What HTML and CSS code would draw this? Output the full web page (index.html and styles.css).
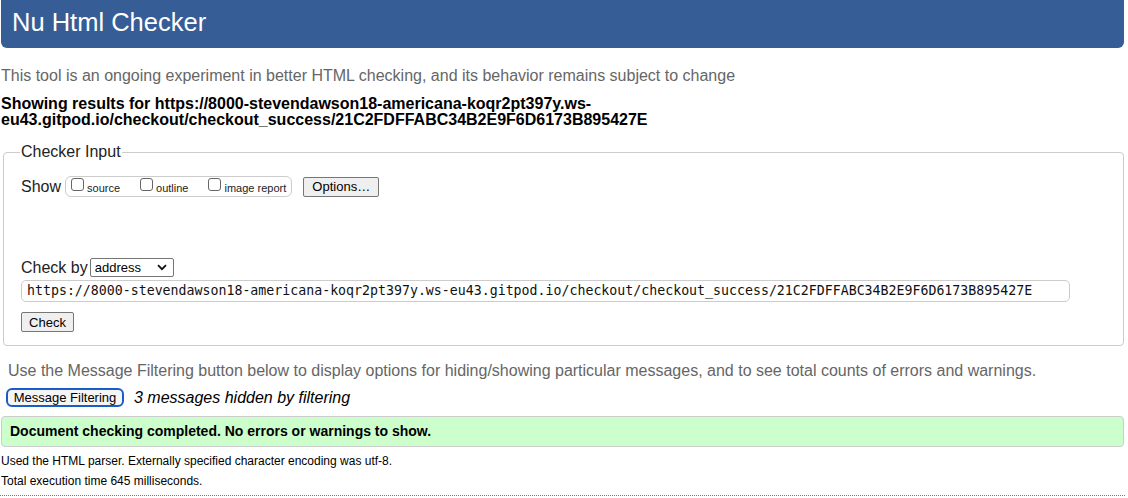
FILE: index.html
```html
<!DOCTYPE html>
<html>
<head>
<meta charset="utf-8">
<title>Nu Html Checker</title>
<link rel="stylesheet" href="styles.css">
</head>
<body>
<h1 class="title">Nu Html Checker</h1>
<p class="intro">This tool is an ongoing experiment in better HTML checking, and its behavior remains subject to change</p>
<p class="results">Showing results for https://8000-stevendawson18-americana-koqr2pt397y.ws-<br>eu43.gitpod.io/checkout/checkout_success/21C2FDFFABC34B2E9F6D6173B895427E</p>
<fieldset class="input-box">
  <legend class="legend">Checker Input</legend>
  <div class="show-row">
    <span class="show-label">Show</span>
    <span class="show-opts">
      <label class="opt"><span class="cb"></span>source</label>
      <label class="opt"><span class="cb"></span>outline</label>
      <label class="opt"><span class="cb"></span>image report</label>
    </span>
    <span class="btn btn-options">Options…</span>
  </div>
  <div class="checkby-row">
    <span class="checkby-label">Check by</span>
    <span class="select">address<svg class="chev" width="10" height="7" viewBox="0 0 10 7"><path d="M1 1.2 L5 5.2 L9 1.2" fill="none" stroke="#111" stroke-width="1.8"/></svg></span>
  </div>
  <div class="url-input">https://8000-stevendawson18-americana-koqr2pt397y.ws-eu43.gitpod.io/checkout/checkout_success/21C2FDFFABC34B2E9F6D6173B895427E</div>
  <span class="btn btn-check">Check</span>
</fieldset>
<p class="filter-note">Use the Message Filtering button below to display options for hiding/showing particular messages, and to see total counts of errors and warnings.</p>
<div class="filter-row">
  <span class="btn btn-filter">Message Filtering</span>
  <span class="hidden-count">3 messages hidden by filtering</span>
</div>
<div class="success">Document checking completed. No errors or warnings to show.</div>
<p class="meta">Used the HTML parser. Externally specified character encoding was utf-8.</p>
<p class="meta">Total execution time 645 milliseconds.</p>
<div class="dotted"></div>
</body>
</html>
```
FILE: styles.css
```css
html, body {
  margin: 0;
  padding: 0;
  background: #fff;
}
body {
  font-family: "Liberation Sans", Arial, Helvetica, sans-serif;
  color: #000;
  width: 1125px;
  font-size: 16px;
}
.title {
  margin: 0 0 0 1px;
  background: #365d95;
  color: #fff;
  font-weight: normal;
  font-size: 25.5px;
  line-height: 44px;
  height: 48px;
  padding: 0 0 0 11px;
  border-radius: 0 0 6px 6px;
  width: 1112px;
}
.intro {
  margin: 18px 0 0 1px;
  color: #666;
  font-size: 16px;
  line-height: 19px;
}
.results {
  margin: 11px 0 0 1px;
  font-weight: bold;
  font-size: 16px;
  line-height: 16px;
}
.input-box {
  margin: 15px 0 0 3px;
  padding: 6px 17px 12px 17px;
  border: 1px solid #ccc;
  border-radius: 4px;
  width: 1085px;
  height: 183px;
  box-sizing: content-box;
}
.legend {
  padding: 0 1px;
  margin-left: -1px;
  font-size: 16px;
  color: #222;
}
.show-row {
  display: flex;
  align-items: center;
  margin-top: 9px;
}
.show-label {
  font-size: 16px;
  color: #222;
  margin-right: 4px;
}
.show-opts {
  display: inline-flex;
  align-items: center;
  border: 1px solid #ccc;
  border-radius: 6px;
  height: 19px;
  padding: 0 5px 0 5px;
  gap: 20px;
}
.opt {
  display: inline-flex;
  align-items: center;
  font-size: 11px;
  color: #222;
  padding-top: 2px;
}
.cb {
  display: inline-block;
  width: 11px;
  height: 11px;
  border: 1px solid #666;
  border-radius: 3px;
  margin-right: 3px;
  margin-top: -6px;
  background: #fff;
}
.btn {
  display: inline-flex;
  align-items: center;
  justify-content: center;
  border: 1px solid #767676;
  border-radius: 2px;
  background: #efefef;
  font-size: 13px;
  color: #000;
  box-sizing: border-box;
}
.btn-options {
  margin-left: 11px;
  width: 76px;
  height: 20px;
}
.checkby-row {
  display: flex;
  align-items: center;
  margin-top: 61px;
}
.checkby-label {
  font-size: 16px;
  color: #222;
  margin-right: 2px;
}
.select {
  display: inline-flex;
  align-items: center;
  justify-content: space-between;
  width: 84px;
  height: 19px;
  box-sizing: border-box;
  border: 1px solid #767676;
  border-radius: 2px;
  padding: 0 6px 0 4px;
  font-size: 13px;
  background: #fff;
}
.url-input {
  margin-top: 3px;
  width: 1049px;
  height: 22px;
  box-sizing: border-box;
  border: 1px solid #ccc;
  border-radius: 5px;
  padding: 0 5px;
  font-family: "DejaVu Sans Mono", Menlo, monospace;
  font-size: 13.25px;
  line-height: 20px;
  color: #111;
  white-space: nowrap;
  overflow: hidden;
}
.btn-check {
  margin-top: 10px;
  width: 53px;
  height: 20px;
}
.filter-note {
  margin: 15px 0 0 8px;
  color: #666;
  font-size: 16px;
  line-height: 19px;
}
.filter-row {
  display: flex;
  align-items: center;
  margin: 8px 0 0 6px;
}
.btn-filter {
  width: 118px;
  height: 19px;
  border: 2px solid #1a5dc8;
  border-radius: 6px;
  background: #f5f5f5;
  font-size: 13px;
}
.hidden-count {
  font-style: italic;
  font-size: 16px;
  margin-left: 10px;
}
.success {
  margin: 9px 0 0 1px;
  width: 1123px;
  height: 31px;
  box-sizing: border-box;
  background: #ccffcc;
  border: 1px solid #ccc;
  border-radius: 4px;
  font-weight: bold;
  font-size: 14px;
  line-height: 29px;
  padding-left: 8px;
}
.meta {
  margin: 7px 0 0 1px;
  font-size: 12px;
  line-height: 15px;
}
.meta + .meta {
  margin-top: 5px;
}
.dotted {
  margin-top: 6px;
  border-top: 1px dotted #777;
  width: 1125px;
}
```
